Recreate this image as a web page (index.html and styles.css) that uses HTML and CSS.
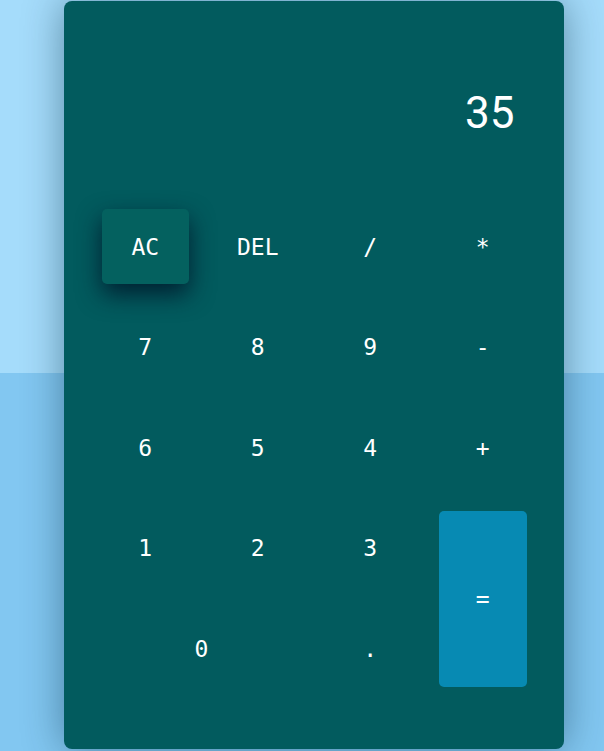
FILE: index.html
```html
<!DOCTYPE html>
<html>
<head>
<meta charset="utf-8">
<link rel="stylesheet" href="styles.css">
</head>
<body>
<div class="page">
  <div class="calc">
    <div class="display">35</div>
    <div class="keys">
      <button class="key key-active">AC</button>
      <button class="key">DEL</button>
      <button class="key">/</button>
      <button class="key">*</button>
      <button class="key">7</button>
      <button class="key">8</button>
      <button class="key">9</button>
      <button class="key">-</button>
      <button class="key">6</button>
      <button class="key">5</button>
      <button class="key">4</button>
      <button class="key">+</button>
      <button class="key">1</button>
      <button class="key">2</button>
      <button class="key">3</button>
      <button class="key key-equals">=</button>
      <button class="key key-zero">0</button>
      <button class="key">.</button>
    </div>
  </div>
</div>
</body>
</html>
```
FILE: styles.css
```css
html, body {
  margin: 0;
  padding: 0;
  height: 100%;
}
body {
  background: linear-gradient(to bottom, #a5dcfb 0, #a5dcfb 373px, #82c7f1 373px, #82c7f1 100%);
  font-family: "DejaVu Sans Mono", monospace;
  overflow: hidden;
}
.page {
  display: flex;
  justify-content: flex-start;
  padding-top: 1px;
  padding-left: 64px;
}
.calc {
  width: 500px;
  height: 748px;
  background: #025b5e;
  border-radius: 8px;
  box-shadow: 0 0 40px rgba(0, 40, 60, 0.45);
  display: flex;
  flex-direction: column;
  box-sizing: border-box;
  padding: 0 37.5px;
}
.display {
  height: 208px;
  display: flex;
  align-items: center;
  justify-content: flex-end;
  padding-right: 12px;
  padding-top: 16px;
  box-sizing: border-box;
  color: #fff;
  font-family: Roboto, "Liberation Sans", sans-serif;
  font-size: 44px;
  line-height: 1;
}
.keys {
  display: grid;
  grid-template-columns: repeat(4, 87.5px);
  grid-auto-rows: 75.3px;
  column-gap: 25px;
  row-gap: 25.3px;
}
.key {
  border: none;
  background: transparent;
  color: #fff;
  font-family: "DejaVu Sans Mono", monospace;
  font-size: 23px;
  border-radius: 5px;
  padding: 0;
  margin: 0;
  cursor: pointer;
}
.key-active {
  background: #04615f;
  box-shadow: 0 10px 24px rgba(0, 20, 40, 0.85);
}
.key-equals {
  grid-row: span 2;
  background: #078ab3;
}
.key-zero {
  grid-column: span 2;
}
```
